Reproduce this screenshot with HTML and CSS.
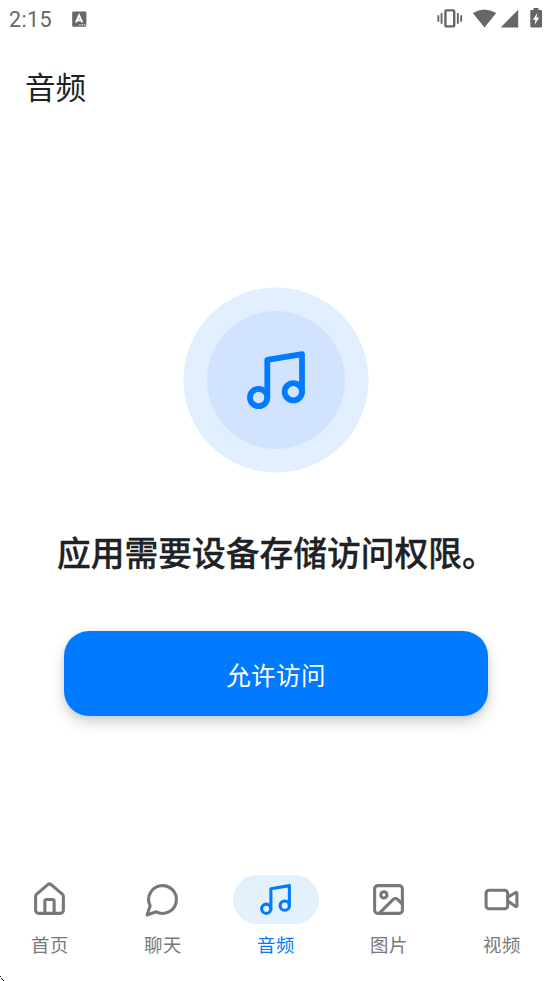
FILE: index.html
```html
<!DOCTYPE html>
<html lang="zh-CN">
<head>
<meta charset="utf-8">
<title>音频</title>
<link rel="stylesheet" href="styles.css">
</head>
<body>
<div class="screen">
  <div class="status">
    <span class="time">2:15</span>
    <svg class="keyboard" width="15" height="16" viewBox="0 0 15 16"><rect x=".2" y=".4" width="14.2" height="15.4" rx="1.4" fill="#666"/><path d="M3.900 11.300 7.100 4.300l3.200 7M5.100 9.200h4" fill="none" stroke="#fff" stroke-width="1.9"/><path d="M7.3 13.2h1.3v1.3H7.3zM9.7 13.2H11v1.3H9.7zM12.1 13.2h1.3v1.3h-1.3z" fill="#fff"/></svg>
    <svg class="system" width="106" height="22" viewBox="0 0 106 22" fill="#666"><path d="M1.4 8.3h1.9v6.4H1.4zM4.6 6h1.9v10.8H4.6zM20.9 6h1.9v10.8h-1.9zM24.2 8.3h1.9v6.4h-1.9z"/><rect x="9.4" y="3.4" width="8.8" height="16" rx="1" fill="none" stroke="#666" stroke-width="2.4"/><path d="M36.8 6.1Q48.5-1 60.2 6.1L48.5 20.4zM82.2 2.7V20.4H64.7zM97.5 3V1h5v2h2.3q1.2 0 1.2 1.2v15q0 1.2-1.2 1.2h-9.3q-1.2 0-1.2-1.2v-15Q94.300 3 95.500 3z"/><path d="m101.400 5.700-4.500 7h2.600l-1 5.200 4.700-7.300h-2.700z" fill="#fff"/></svg>
  </div>
  <header class="title">音频</header>
  <main class="content">
    <svg class="emblem" viewBox="0 0 186 186"><circle class="halo" cx="93" cy="93" r="92.6"/><circle class="disc" cx="93" cy="93" r="69"/><g class="note" transform="translate(58.300 58.500) scale(2.890)"><path d="M9 18V5l12-2v13"/><circle cx="6" cy="18" r="3"/><circle cx="18" cy="16" r="3"/></g></svg>
    <h1 class="message">应用需要设备存储访问权限。</h1>
    <button class="allow">允许访问</button>
  </main>
  <nav class="tabs">
    <a class="tab"><span class="pill"><svg viewBox="0 0 24 24"><path d="M15 21v-8a1 1 0 0 0-1-1h-4a1 1 0 0 0-1 1v8"/><path d="M3 10a2 2 0 0 1 .709-1.528l7-6a2 2 0 0 1 2.582 0l7 6A2 2 0 0 1 21 10v9a2 2 0 0 1-2 2H5a2 2 0 0 1-2-2z"/></svg></span><span class="label">首页</span></a>
    <a class="tab"><span class="pill"><svg viewBox="0 0 24 24"><path d="M7.900 20A9 9 0 1 0 4 16.100L2 22Z"/></svg></span><span class="label">聊天</span></a>
    <a class="tab active"><span class="pill"><svg viewBox="0 0 24 24"><path d="M9 18V5l12-2v13"/><circle cx="6" cy="18" r="3"/><circle cx="18" cy="16" r="3"/></svg></span><span class="label">音频</span></a>
    <a class="tab"><span class="pill"><svg viewBox="0 0 24 24"><rect x="3" y="3" width="18" height="18" rx="2"/><circle cx="9" cy="9" r="2"/><path d="m21 15-3.086-3.086a2 2 0 0 0-2.828 0L6 21"/></svg></span><span class="label">图片</span></a>
    <a class="tab"><span class="pill"><svg viewBox="0 0 24 24"><path d="m16 13 5.223 3.482a.5.5 0 0 0 .777-.416V7.870a.5.5 0 0 0-.752-.432L16 10.500"/><rect x="2" y="6" width="14" height="12" rx="2"/></svg></span><span class="label">视频</span></a>
  </nav>
  <svg class="corner" width="5" height="5" viewBox="0 0 5 5"><path d="M0 0h1v1H0zM1 2h1v1H1zM2 3h1v1H2zM3 4h1v1H3z" fill="#111"/></svg>
</div>
</body>
</html>
```
FILE: styles.css
```css
* { box-sizing: border-box; }
body { margin: 0; background: #fff; font-family: "Noto Sans CJK SC", sans-serif; color: #202124; }
.screen { position: relative; width: 552px; height: 981px; display: flex; flex-direction: column; overflow: hidden; background: #fff; }
.status { height: 38px; display: flex; align-items: center; padding: 0 10px 0 9px; flex: none; }
.time { width: 63px; font: 21.5px/38px Roboto, sans-serif; letter-spacing: .4px; color: #666; padding-top: 1px; }
.keyboard { display: block; margin-top: -1px; }
.system { display: block; margin-left: auto; margin-top: -2px; }
.title { height: 98px; padding-left: 25px; font-size: 30.500px; line-height: 96px; flex: none; }
.content { flex: 1; display: flex; flex-direction: column; align-items: center; padding-top: 151px; }
.emblem { width: 186px; height: 186px; flex: none; }
.halo { fill: #e2efff; }
.disc { fill: #d2e3ff; }
svg { display: block; }
.note { fill: none; stroke: #007aff; stroke-width: 2; stroke-linecap: round; stroke-linejoin: round; }
.message { margin: 54px 0 0; padding-left: 1px; font-size: 33.750px; line-height: 50px; font-weight: 500; -webkit-text-stroke: .3px #202124; white-space: nowrap; }
.allow { margin-top: 54px; width: 424px; height: 85px; padding: 2px 0 0; border: 0; border-radius: 25px; background: #007aff; color: #fff; font-family: inherit; font-size: 24.500px; letter-spacing: .4px; box-shadow: 0 7px 14px rgba(0,0,0,.17), 0 1px 7px rgba(0,0,0,.07); }
.tabs { height: 107px; display: flex; justify-content: space-between; padding: 0 7.500px 0 6.500px; flex: none; }
.tab { width: 86px; display: flex; flex-direction: column; align-items: center; color: #787878; }
.pill { width: 86px; height: 49px; border-radius: 25px; display: flex; align-items: center; justify-content: center; margin-top: 1px; }
.pill svg { width: 37px; height: 37px; fill: none; stroke: currentColor; stroke-width: 2; stroke-linecap: round; stroke-linejoin: round; }
.label { font-size: 18.400px; line-height: 28px; letter-spacing: .6px; margin-top: 6px; padding-left: 1px; }
.active { color: #007aff; }
.active .pill { background: #e3f1fd; }
.corner { position: absolute; left: 0; bottom: 0; }
```
